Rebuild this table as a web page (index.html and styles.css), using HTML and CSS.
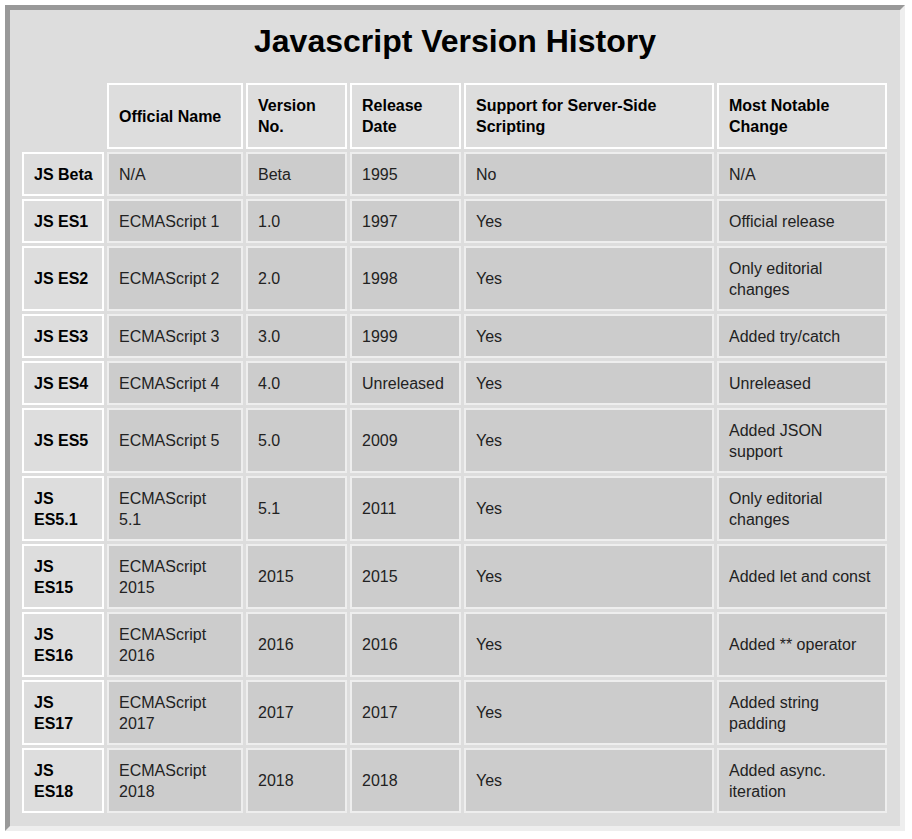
FILE: index.html
```html
<!DOCTYPE html>
<html>
<head>
<meta charset="utf-8">
<title>Javascript Version History</title>
<link rel="stylesheet" href="styles.css">
</head>
<body>
<div class="wrap">
  <h1 class="title">Javascript Version History</h1>
  <table class="history">
    <thead>
      <tr>
        <th class="corner c1"></th>
        <th class="c2">Official Name</th>
        <th class="c3">Version No.</th>
        <th class="c4">Release Date</th>
        <th class="c5">Support for Server-Side Scripting</th>
        <th class="c6">Most Notable Change</th>
      </tr>
    </thead>
    <tbody>
      <tr><th class="rh">JS Beta</th><td class="name">N/A</td><td>Beta</td><td>1995</td><td>No</td><td>N/A</td></tr>
      <tr><th class="rh">JS ES1</th><td class="name">ECMAScript 1</td><td>1.0</td><td>1997</td><td>Yes</td><td>Official release</td></tr>
      <tr><th class="rh">JS ES2</th><td class="name">ECMAScript 2</td><td>2.0</td><td>1998</td><td>Yes</td><td>Only editorial changes</td></tr>
      <tr><th class="rh">JS ES3</th><td class="name">ECMAScript 3</td><td>3.0</td><td>1999</td><td>Yes</td><td>Added try/catch</td></tr>
      <tr><th class="rh">JS ES4</th><td class="name">ECMAScript 4</td><td>4.0</td><td>Unreleased</td><td>Yes</td><td>Unreleased</td></tr>
      <tr><th class="rh">JS ES5</th><td class="name">ECMAScript 5</td><td>5.0</td><td>2009</td><td>Yes</td><td>Added JSON support</td></tr>
      <tr><th class="rh">JS ES5.1</th><td class="name">ECMAScript 5.1</td><td>5.1</td><td>2011</td><td>Yes</td><td>Only editorial changes</td></tr>
      <tr><th class="rh">JS ES15</th><td class="name">ECMAScript 2015</td><td>2015</td><td>2015</td><td>Yes</td><td>Added let and const</td></tr>
      <tr><th class="rh">JS ES16</th><td class="name">ECMAScript 2016</td><td>2016</td><td>2016</td><td>Yes</td><td>Added ** operator</td></tr>
      <tr><th class="rh">JS ES17</th><td class="name">ECMAScript 2017</td><td>2017</td><td>2017</td><td>Yes</td><td>Added string padding</td></tr>
      <tr><th class="rh">JS ES18</th><td class="name">ECMAScript 2018</td><td>2018</td><td>2018</td><td>Yes</td><td>Added async. iteration</td></tr>
    </tbody>
  </table>
</div>
</body>
</html>
```

FILE: styles.css
```css
html, body {
  background: #ffffff;
}
body {
  margin: 5px;
  font-family: "Liberation Sans", Arial, sans-serif;
  color: #000;
}
.wrap {
  box-sizing: border-box;
  width: 900px;
  background: #dddddd;
  border-style: solid;
  border-width: 5px;
  border-color: #999999 #eeeeee #eeeeee #999999;
  padding: 0 9px 10px 9px;
}
.title {
  margin: 13px 0 20px 0;
  font-size: 32px;
  line-height: 37px;
  font-weight: bold;
  text-align: center;
  color: #000;
}
.history {
  table-layout: fixed;
  width: 871px;
  border-collapse: separate;
  border-spacing: 3px;
  font-size: 16px;
  line-height: 21px;
}
.history th,
.history td {
  box-sizing: border-box;
  text-align: left;
  vertical-align: middle;
  padding: 9.5px 10px;
}
.history thead th {
  background: #dddddd;
  border: 2px solid #ffffff;
  padding: 10px 10px;
  font-weight: bold;
  color: #000;
}
.history thead th.corner {
  border-color: transparent;
}
.history th.rh {
  background: #dddddd;
  border: 2px solid #ffffff;
  padding-right: 6px;
  font-weight: bold;
  color: #000;
}
.history td {
  background: #cccccc;
  border: 2px solid #eeeeee;
  color: #222222;
}
.c1 { width: 82px; }
.c2 { width: 136px; }
.c3 { width: 101px; }
.c4 { width: 111px; }
.c5 { width: 250px; }
.c6 { width: 170px; }
```
